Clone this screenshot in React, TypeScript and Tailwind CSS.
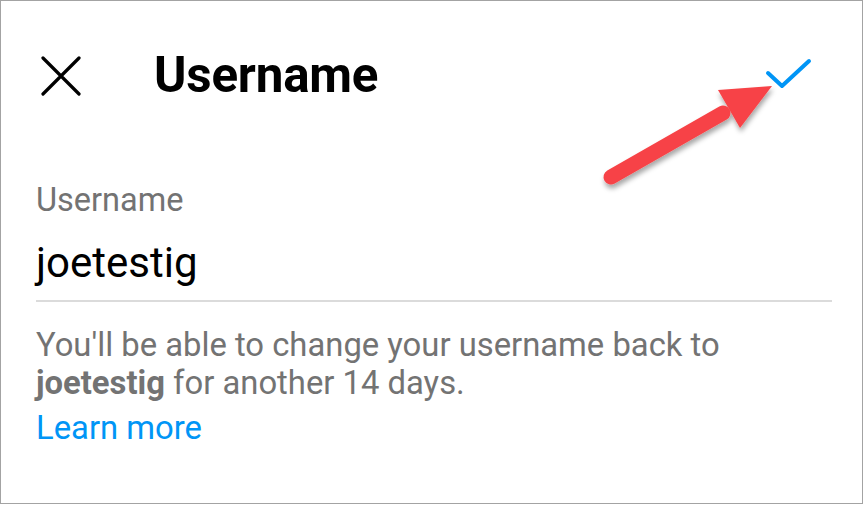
import React from 'react';

const font = { fontFamily: 'Roboto, "Noto Sans", sans-serif' };

function CloseIcon() {
    return (
        <svg width="40" height="40" viewBox="0 0 40 40" fill="none" stroke="#000" strokeWidth="3.2" strokeLinecap="round">
            <path d="M2 2L38 38M38 2L2 38" />
        </svg>
    );
}

function CheckIcon() {
    return (
        <svg width="50" height="34" viewBox="0 0 50 34" fill="none" stroke="#0095f6" strokeWidth="4" strokeLinecap="round" strokeLinejoin="round">
            <path d="M4 16L18 29L45 4" />
        </svg>
    );
}

function Arrow() {
    // red annotation arrow, lies over the page
    return (
        <svg className="absolute left-[590px] top-[70px]" width="200" height="130" viewBox="0 0 200 130" fill="none">
            <defs>
                <filter id="sh" x="-20%" y="-20%" width="140%" height="140%">
                    <feDropShadow dx="1" dy="4" stdDeviation="2.5" floodColor="#000" floodOpacity="0.35" />
                </filter>
            </defs>
            <g filter="url(#sh)">
                <path d="M20 106L132 42" stroke="#f74346" strokeWidth="15" strokeLinecap="round" />
                <path d="M127 19L181 15L149 57Z" fill="#f74346" />
            </g>
        </svg>
    );
}

export default function App() {
    return (
        <div className="w-[864px] h-[505px] bg-white" style={font}>
            <div className="relative w-[863px] h-[504px] border border-[#a3a3a3] bg-white">
                {/* Header */}
                <div className="flex items-center h-[151px] -mt-[1px]">
                    <div className="ml-[40px] flex items-center">
                        <CloseIcon />
                    </div>
                    <h1 className="ml-[73px] text-[49.3px] leading-none font-bold text-black tracking-[-0.2px]">Username</h1>
                    <div className="ml-auto mr-[48px] -mt-[4px]">
                        <CheckIcon />
                    </div>
                </div>

                {/* Field */}
                <div className="px-[35px] mt-[30px]">
                    <div className="text-[32.5px] leading-[38px] text-[#737373]">Username</div>
                    <div className="mt-[20px] text-[42px] leading-[48px] text-black">joetestig</div>
                    <div className="mt-[13px] h-[2px] bg-[#dbdbdb] w-[796px]" />

                    <p className="mt-[24px] text-[32.8px] leading-[38px] text-[#737373]">
                        You'll be able to change your username back to
                        <br />
                        <span className="font-bold">joetestig</span> for another 14 days.
                    </p>
                    <a className="block mt-[7px] text-[32.8px] leading-[38px] text-[#0095f6]">Learn more</a>
                </div>

                <Arrow />
            </div>
        </div>
    );
}
